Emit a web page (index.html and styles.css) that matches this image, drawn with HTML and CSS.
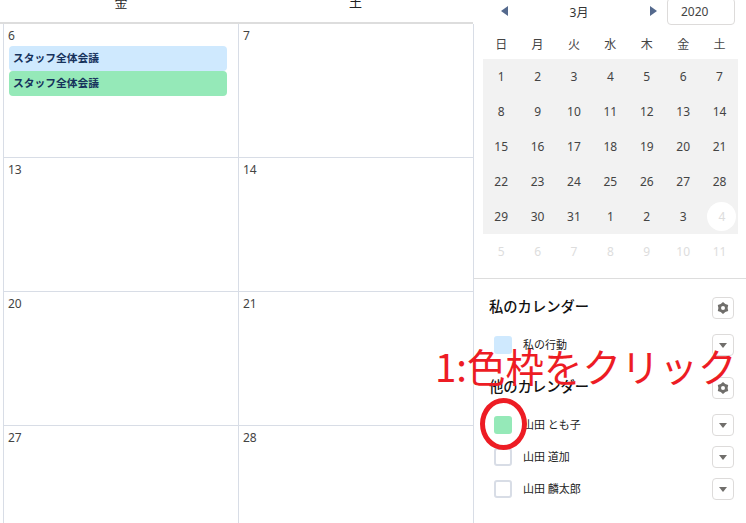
FILE: index.html
```html
<!DOCTYPE html>
<html lang="ja">
<head>
    <meta charset="UTF-8">
    <title>カレンダー</title>
    <link rel="stylesheet" href="styles.css">
</head>
<body>
    <div class="page">
        <div class="main">
            <div class="week-head">
                <div>金</div>
                <div>土</div>
            </div>
            <div class="month">
                <div class="day">
                    <span class="num">6</span>
                    <div class="event blue">スタッフ全体会議</div>
                    <div class="event green">スタッフ全体会議</div>
                </div>
                <div class="day"><span class="num">7</span></div>
                <div class="day"><span class="num">13</span></div>
                <div class="day"><span class="num">14</span></div>
                <div class="day"><span class="num">20</span></div>
                <div class="day"><span class="num">21</span></div>
                <div class="day"><span class="num">27</span></div>
                <div class="day"><span class="num">28</span></div>
            </div>
        </div>

        <div class="side">
            <div class="picker">
                <div class="picker-nav">
                    <svg class="arrow prev" width="7" height="10" viewBox="0 0 7 10"><path d="M7 0v10L0 5z"/></svg>
                    <span class="month-name">3月</span>
                    <svg class="arrow next" width="7" height="10" viewBox="0 0 7 10"><path d="M0 0v10l7-5z"/></svg>
                    <div class="year">2020</div>
                </div>
                <div class="dow">
                    <span>日</span><span>月</span><span>火</span><span>水</span><span>木</span><span>金</span><span>土</span>
                </div>
                <div class="dates">
                    <span>1</span><span>2</span><span>3</span><span>4</span><span>5</span><span>6</span><span>7</span>
                    <span>8</span><span>9</span><span>10</span><span>11</span><span>12</span><span>13</span><span>14</span>
                    <span>15</span><span>16</span><span>17</span><span>18</span><span>19</span><span>20</span><span>21</span>
                    <span>22</span><span>23</span><span>24</span><span>25</span><span>26</span><span>27</span><span>28</span>
                    <span>29</span><span>30</span><span>31</span><span>1</span><span>2</span><span>3</span><span class="today">4</span>
                </div>
                <div class="dates next-month">
                    <span>5</span><span>6</span><span>7</span><span>8</span><span>9</span><span>10</span><span>11</span>
                </div>
            </div>

            <div class="lists">
                <div class="list-head">
                    <h3>私のカレンダー</h3>
                    <button class="icon-btn">
                        <svg width="12" height="12" viewBox="0 0 12 12"><path fill-rule="evenodd" d="M6 0l2.3 2 2.9 1-.6 3 .6 3-2.9 1L6 12l-2.3-2-2.9-1 .6-3-.6-3 2.9-1zM6 4a2 2 0 100 4 2 2 0 000-4z"/></svg>
                    </button>
                </div>
                <div class="cal-row">
                    <span class="swatch blue"></span>
                    <span class="cal-name">私の行動</span>
                    <button class="icon-btn"><span class="caret"></span></button>
                </div>

                <div class="list-head second">
                    <h3>他のカレンダー</h3>
                    <button class="icon-btn">
                        <svg width="12" height="12" viewBox="0 0 12 12"><path fill-rule="evenodd" d="M6 0l2.3 2 2.9 1-.6 3 .6 3-2.9 1L6 12l-2.3-2-2.9-1 .6-3-.6-3 2.9-1zM6 4a2 2 0 100 4 2 2 0 000-4z"/></svg>
                    </button>
                </div>
                <div class="cal-row">
                    <span class="swatch green"></span>
                    <span class="cal-name">山田 とも子</span>
                    <button class="icon-btn"><span class="caret"></span></button>
                </div>
                <div class="cal-row">
                    <span class="swatch empty"></span>
                    <span class="cal-name">山田 道加</span>
                    <button class="icon-btn"><span class="caret"></span></button>
                </div>
                <div class="cal-row">
                    <span class="swatch empty"></span>
                    <span class="cal-name">山田 麟太郎</span>
                    <button class="icon-btn"><span class="caret"></span></button>
                </div>
            </div>
        </div>

        <!-- annotation drawn over the screenshot -->
        <div class="note">1:色枠をクリック</div>
        <div class="ring"></div>
    </div>
</body>
</html>
```

FILE: styles.css
```css
html, body {
    margin: 0;
    padding: 0;
}
body {
    font-family: "Noto Sans", "Noto Sans CJK JP", sans-serif;
    color: #444;
    background: #fff;
}
.page {
    position: relative;
    display: flex;
    width: 746px;
    height: 523px;
    overflow: hidden;
}
.main {
    width: 470px;
    margin-left: 3px;
    flex: none;
    border-left: 1px solid #d8dde6;
}
.week-head {
    display: grid;
    grid-template-columns: 238px 235px;
    height: 22px;
    margin-left: -4px;
    width: 473px;
    border-bottom: 2px solid #dddddd;
    background: #fff;
}
.week-head div {
    font-size: 13px;
    line-height: 18px;
    margin-top: -7px;
    text-align: center;
    color: #222;
}
.week-head div:first-child {
    padding-left: 4px;
}
.month {
    display: grid;
    grid-template-columns: 235px 235px;
    grid-template-rows: repeat(4, 134px);
}
.day {
    border-right: 1px solid #d8dde6;
    border-bottom: 1px solid #d8dde6;
    padding: 4px 5px 0 4px;
    box-sizing: border-box;
    font-size: 12px;
}
.num {
    display: block;
    line-height: 16px;
    margin-bottom: 2px;
    color: #444;
}
.event {
    height: 25px;
    line-height: 25px;
    width: 218px;
    margin-left: 1px;
    padding-left: 4px;
    box-sizing: border-box;
    border-radius: 4px;
    font-size: 10.75px;
    font-weight: 700;
    color: #16325c;
}
.blue {
    background: #cfe9fe;
}
.green {
    background: #95e9b8;
}
.side {
    width: 272px;
    flex: none;
}
.picker {
    padding: 0 8px 0 9px;
    height: 278px;
    border-bottom: 1px solid #dddddd;
    box-sizing: content-box;
}
.picker-nav {
    position: relative;
    display: flex;
    align-items: center;
    height: 25px;
    font-size: 12px;
}
.arrow {
    flex: none;
    fill: #54698d;
    margin-top: -4px;
}
.arrow.prev {
    margin-left: 18px;
}
.month-name {
    width: 142px;
    text-align: center;
    margin-top: -1px;
    color: #333;
}
.year {
    width: 68px;
    height: 27px;
    margin: -2px 0 0 10px;
    border: 1px solid #dddbda;
    border-radius: 4px;
    box-sizing: border-box;
    font-size: 12px;
    line-height: 25px;
    padding-left: 13px;
    flex: none;
}
.dow, .dates {
    display: grid;
    grid-template-columns: repeat(7, 36.4px);
    width: 255px;
    font-size: 12px;
    text-align: center;
}
.dow {
    height: 34px;
    line-height: 40px;
}
.dates {
    background: #f2f2f2;
    grid-auto-rows: 35px;
    line-height: 35px;
}
.dates span {
    display: block;
}
.today {
    width: 29px;
    height: 29px;
    line-height: 29px;
    margin: 3px 0 0 6px;
    border-radius: 50%;
    background: #fff;
    color: #ddd;
}
.next-month {
    background: none;
    color: #ddd;
}
.lists {
    padding: 18px 12px 0 15px;
}
.list-head {
    display: flex;
    align-items: center;
    justify-content: space-between;
    height: 22px;
    margin-bottom: 15px;
}
.list-head.second {
    margin-top: 21px;
    margin-bottom: 15px;
}
.list-head h3 {
    margin: -5px 0 0;
    font-size: 14.3px;
    font-weight: 500;
    color: #111;
}
.cal-row {
    display: flex;
    align-items: center;
    height: 22px;
    margin-bottom: 10px;
    font-size: 11px;
}
.swatch {
    width: 18px;
    height: 18px;
    margin-left: 5px;
    border-radius: 3px;
    box-sizing: border-box;
    flex: none;
}
.swatch.empty {
    border: 2px solid #d8dde6;
}
.cal-name {
    margin: -2px 0 0 11px;
    flex: 1;
    color: #222;
}
.icon-btn {
    width: 22px;
    height: 22px;
    padding: 0;
    display: flex;
    align-items: center;
    justify-content: center;
    background: #fff;
    border: 1px solid #dddbda;
    border-radius: 4px;
    box-sizing: border-box;
    flex: none;
}
.icon-btn svg {
    fill: #706e6b;
}
.caret {
    width: 0;
    height: 0;
    border-left: 4.5px solid transparent;
    border-right: 4.5px solid transparent;
    border-top: 5px solid #706e6b;
}
.note {
    position: absolute;
    left: 435px;
    top: 341px;
    font-family: "Noto Sans CJK JP", sans-serif;
    font-size: 38.5px;
    line-height: 48px;
    white-space: nowrap;
    color: #ed1c24;
}
.ring {
    position: absolute;
    left: 480px;
    top: 398px;
    width: 47px;
    height: 52px;
    border: 5px solid #ed1c24;
    border-radius: 50%;
    box-sizing: border-box;
}
```
